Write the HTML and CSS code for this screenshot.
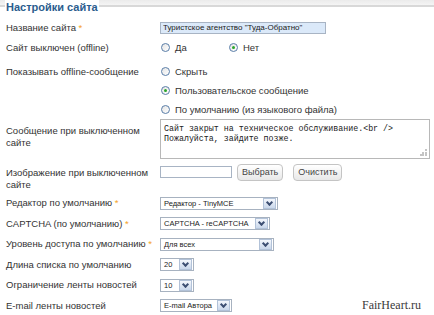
FILE: index.html
```html
<!DOCTYPE html>
<html lang="ru">
<head>
    <meta charset="UTF-8">
    <title>Настройки сайта</title>
    <link rel="stylesheet" href="styles.css">
</head>
<body>
    <div class="settings">
        <div class="legend"><span>Настройки сайта</span></div>

        <div class="row row-name">
            <label class="label">Название сайта <span class="req">*</span></label>
            <div class="control">
                <input class="text text-name" type="text" value='Туристское агентство "Туда-Обратно"'>
            </div>
        </div>

        <div class="row row-offline">
            <label class="label">Сайт выключен (offline)</label>
            <div class="control radio-inline">
                <span class="radio"><i class="dot"></i>Да</span>
                <span class="radio"><i class="dot checked"></i>Нет</span>
            </div>
        </div>

        <div class="row row-show">
            <label class="label">Показывать offline-сообщение</label>
            <div class="control radio-list">
                <span class="radio"><i class="dot"></i>Скрыть</span>
                <span class="radio"><i class="dot checked"></i>Пользовательское сообщение</span>
                <span class="radio"><i class="dot"></i>По умолчанию (из языкового файла)</span>
            </div>
        </div>

        <div class="row row-message">
            <label class="label">Сообщение при выключенном сайте</label>
            <div class="control">
                <div class="textarea">Сайт закрыт на техническое обслуживание.&lt;br /&gt;<br>Пожалуйста, зайдите позже.<span class="grip"><svg width="7" height="7" viewBox="0 0 7 7"><g fill="#c4c4c4"><rect x="5" y="0" width="2" height="2"/><rect x="2" y="3" width="2" height="2"/><rect x="5" y="3" width="2" height="2"/><rect x="0" y="5" width="2" height="2"/><rect x="2" y="5" width="2" height="2"/><rect x="5" y="5" width="2" height="2"/></g></svg></span></div>
            </div>
        </div>

        <div class="row row-image">
            <label class="label">Изображение при выключенном сайте</label>
            <div class="control image-pick">
                <input class="text text-image" type="text">
                <button class="btn">Выбрать</button>
                <button class="btn btn-clear">Очистить</button>
            </div>
        </div>

        <div class="row row-select first">
            <label class="label">Редактор по умолчанию <span class="req">*</span></label>
            <div class="control"><div class="select w-editor"><span>Редактор - TinyMCE</span><i class="arrow"></i></div></div>
        </div>

        <div class="row row-select">
            <label class="label">CAPTCHA (по умолчанию) <span class="req">*</span></label>
            <div class="control"><div class="select w-captcha"><span>CAPTCHA - reCAPTCHA</span><i class="arrow"></i></div></div>
        </div>

        <div class="row row-select">
            <label class="label">Уровень доступа по умолчанию <span class="req">*</span></label>
            <div class="control"><div class="select w-access"><span>Для всех</span><i class="arrow"></i></div></div>
        </div>

        <div class="row row-select">
            <label class="label">Длина списка по умолчанию</label>
            <div class="control"><div class="select w-num"><span>20</span><i class="arrow"></i></div></div>
        </div>

        <div class="row row-select">
            <label class="label">Ограничение ленты новостей</label>
            <div class="control"><div class="select w-num"><span>10</span><i class="arrow"></i></div></div>
        </div>

        <div class="row row-select">
            <label class="label">E-mail ленты новостей</label>
            <div class="control"><div class="select w-email"><span>E-mail Автора</span><i class="arrow"></i></div></div>
        </div>

        <div class="watermark">FairHeart.ru</div>
    </div>
</body>
</html>
```

FILE: styles.css
```css
body {
    margin: 0;
    font-family: "Liberation Sans", Arial, sans-serif;
    font-size: 9.5px;
    color: #333;
    background-color: #fff;
}
.settings {
    position: relative;
    width: 434px;
    height: 315px;
    overflow: hidden;
}
.legend {
    display: flex;
    align-items: flex-start;
    height: 17px;
    background: linear-gradient(#ebebeb, #f6f6f6) top left / 100% 6px no-repeat;
}
.legend::before,
.legend::after {
    content: "";
    margin-top: 5px;
    border-top: 2px solid #d8d8d8;
}
.legend::before {
    width: 5px;
}
.legend::after {
    flex: 1;
}
.legend span {
    padding: 0 1px;
    line-height: 15px;
    font-size: 11px;
    font-weight: bold;
    color: #2b5d8e;
    background-color: #fff;
}
.row {
    display: grid;
    grid-template-columns: 160px 1fr;
    align-items: center;
}
.label {
    padding-left: 6px;
    line-height: 12px;
}
.req {
    color: #f5a31f;
}
.control {
    display: flex;
}
.row-name {
    height: 21px;
}
.row-offline {
    height: 19px;
}
.row-show {
    margin-top: 5px;
    align-items: start;
}
.row-show .label {
    line-height: 19px;
}
.radio-list {
    flex-direction: column;
}
.radio {
    display: flex;
    align-items: center;
    height: 19px;
    padding-left: 1px;
}
.radio-inline .radio:first-child {
    width: 67px;
}
.dot {
    position: relative;
    width: 9px;
    height: 9px;
    margin-right: 5px;
    border: 1px solid #5a7ea8;
    border-radius: 50%;
    background: linear-gradient(135deg, #e4e4e4, #fff);
    box-sizing: border-box;
}
.dot.checked::after {
    content: "";
    position: absolute;
    left: 2px;
    top: 2px;
    width: 3px;
    height: 3px;
    border-radius: 50%;
    background-color: #2aa52a;
}
.text {
    box-sizing: border-box;
    height: 12px;
    padding: 0 2px;
    border: 1px solid #a8b4c4;
    font-family: "Liberation Sans", Arial, sans-serif;
    font-size: 8px;
    color: #222;
    outline: none;
}
.text-name {
    width: 166px;
    background-color: #dbe9f9;
}
.row-message {
    height: 41px;
    align-items: start;
}
.row-message .label {
    padding-top: 6px;
}
.textarea {
    position: relative;
    box-sizing: border-box;
    width: 270px;
    height: 40px;
    padding: 4px 3px;
    border: 1px solid #b8b8b8;
    font-family: "Liberation Mono", "Courier New", monospace;
    font-size: 8.3px;
    line-height: 10px;
    color: #222;
}
.grip {
    position: absolute;
    right: 2px;
    bottom: 2px;
    line-height: 0;
}
.row-image {
    margin-top: 2px;
    align-items: start;
}
.row-image .label {
    padding-top: 5px;
}
.image-pick {
    align-items: center;
    margin-top: 1px;
    height: 18px;
}
.text-image {
    width: 72px;
    background-color: #fff;
}
.btn {
    box-sizing: border-box;
    height: 17px;
    margin-left: 5px;
    padding: 0 4px;
    border: 1px solid #c4c4c4;
    border-radius: 4px;
    background: linear-gradient(#ffffff, #e8e8e8);
    font-family: "Liberation Sans", Arial, sans-serif;
    font-size: 9px;
    color: #444;
}
.btn-clear {
    margin-left: 10px;
}
.row-select {
    height: 20.5px;
}
.row-select.first {
    margin-top: 2px;
}
.select {
    display: flex;
    align-items: center;
    justify-content: space-between;
    box-sizing: border-box;
    height: 13px;
    padding: 0 1px 0 3px;
    border: 1px solid #a7b2c0;
    background-color: #fff;
    font-size: 7.5px;
    color: #222;
    white-space: nowrap;
}
.arrow {
    position: relative;
    flex: none;
    width: 11px;
    height: 9px;
    margin-left: 1px;
    border: 1px solid #b2c2d8;
    background: linear-gradient(#f4f7fc, #c9d7eb);
}
.arrow::after {
    content: "";
    position: absolute;
    left: 3px;
    top: 1px;
    width: 3px;
    height: 3px;
    border-right: 2px solid #3d4f73;
    border-bottom: 2px solid #3d4f73;
    transform: rotate(45deg);
}
.w-editor {
    width: 118px;
}
.w-captcha {
    width: 110px;
}
.w-access {
    width: 114px;
}
.w-num {
    width: 34px;
}
.w-email {
    width: 72px;
}
.watermark {
    position: absolute;
    left: 362px;
    top: 298px;
    font-family: "Liberation Serif", "Times New Roman", serif;
    font-size: 12px;
    color: #3a3a3a;
}
```
